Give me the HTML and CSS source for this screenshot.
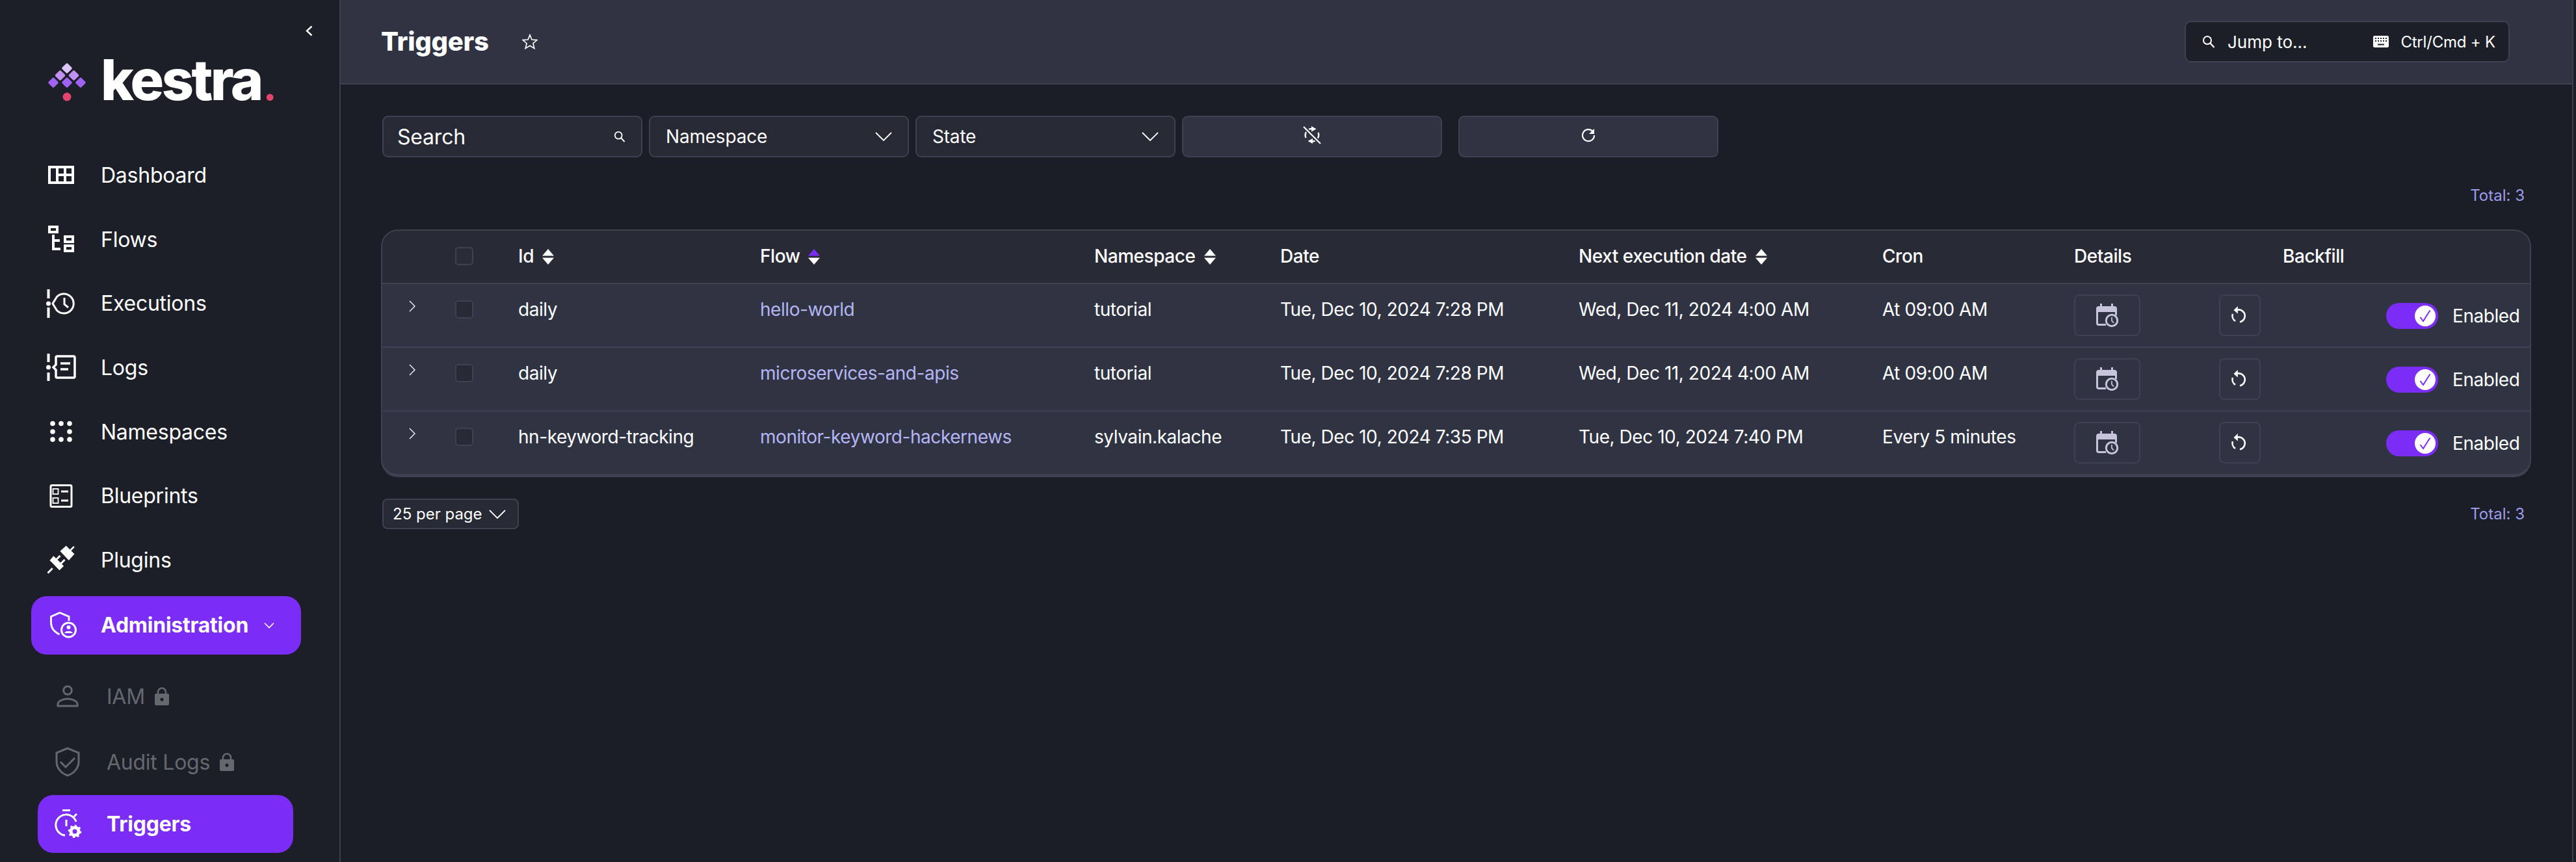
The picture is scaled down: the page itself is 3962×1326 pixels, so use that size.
FILE: index.html
```html
<!DOCTYPE html>
<html lang="en">
<head>
<meta charset="utf-8">
<title>Triggers</title>
<link rel="stylesheet" href="styles.css">
</head>
<body>
<svg class="defs" width="0" height="0" aria-hidden="true">
  <defs>
    <symbol id="i-chev-down" viewBox="0 0 26 14"><path d="M1 1l12 12L25 1" fill="none" stroke="currentColor" stroke-width="1.8"/></symbol>
    <symbol id="i-search" viewBox="0 0 20 20"><circle cx="8" cy="8" r="6" fill="none" stroke="currentColor" stroke-width="2"/><path d="M12.5 12.5L18.5 19" stroke="currentColor" stroke-width="2.2" fill="none"/></symbol>
    <symbol id="i-sort" viewBox="0 0 20 24"><path d="M10 0l9 10.5H1z" fill="currentColor"/><path d="M10 24L1 13.5h18z" fill="#fff"/></symbol>
    <symbol id="i-lock" viewBox="0 0 22 28"><path d="M5 11V7.500a6 6 0 0 1 12 0V11" fill="none" stroke="currentColor" stroke-width="2.500"/><path fill-rule="evenodd" d="M2 10h18a2 2 0 0 1 2 2v14a2 2 0 0 1-2 2H2a2 2 0 0 1-2-2V12a2 2 0 0 1 2-2zm9 6.500a2.600 2.600 0 1 0 0 5.200 2.600 2.600 0 0 0 0-5.200z" fill="currentColor"/></symbol>
    <symbol id="i-expand" viewBox="0 0 10 18"><path d="M1 1l8 8-8 8" fill="none" stroke="currentColor" stroke-width="1.300"/></symbol>
    <symbol id="i-cal" viewBox="0 0 34 37"><path fill="currentColor" d="M6 0h3v4h14V0h3v4h2a4 4 0 0 1 4 4v10h-3v-5H3v17a1 1 0 0 0 1 1h11v3H4a4 4 0 0 1-4-4V8a4 4 0 0 1 4-4h2z"/><circle cx="24" cy="26" r="8.700" fill="#2f3342" stroke="currentColor" stroke-width="3"/><path d="M24 21v5.500l3 3" fill="none" stroke="currentColor" stroke-width="1.800"/></symbol>
    <symbol id="i-backfill" viewBox="0 0 26 28"><path d="M9.500 5.600A9.500 9.500 0 0 1 13 24.300M6 22.900A9.500 9.500 0 0 1 2 12" fill="none" stroke="currentColor" stroke-width="2.600"/><path d="M9.800 0v11.500L3.500 6z" fill="currentColor"/></symbol>
    <symbol id="i-check" viewBox="0 0 18 20"><path d="M1.500 12l4.500 6L16.500 1.500" fill="none" stroke="currentColor" stroke-width="2"/></symbol>
  </defs>
</svg>

<div class="app">
  <aside class="sidebar">
    <button class="collapse" type="button" aria-label="Collapse menu">
      <svg width="11" height="17" viewBox="0 0 11 17"><path d="M9.500 1.500l-7.500 7 7.500 7" fill="none" stroke="#fff" stroke-width="2.400"/></svg>
    </button>
    <div class="logo">
      <svg class="logo-mark" width="62" height="62" viewBox="0 0 62 62">
        <g>
          <rect x="-6" y="-6" width="12" height="12" rx="2" transform="translate(31 8) rotate(45)" fill="#dcc5f9"/>
          <rect x="-6" y="-6" width="12" height="12" rx="2" transform="translate(20.500 19) rotate(45)" fill="#c090f2"/>
          <rect x="-6" y="-6" width="12" height="12" rx="2" transform="translate(41.500 19) rotate(45)" fill="#c090f2"/>
          <rect x="-6" y="-6" width="12" height="12" rx="2" transform="translate(10 30) rotate(45)" fill="#a062f3"/>
          <rect x="-6" y="-6" width="12" height="12" rx="2" transform="translate(31 30) rotate(45)" fill="#a062f3"/>
          <rect x="-6" y="-6" width="12" height="12" rx="2" transform="translate(52 30) rotate(45)" fill="#a062f3"/>
          <circle cx="31" cy="52" r="6.500" fill="#e2436f"/>
        </g>
      </svg>
      <span class="wordmark">kestra<span class="wordmark-dot">.</span></span>
    </div>
    <nav class="nav">
      <a class="nav-item">
        <svg class="nav-icon" width="42" height="30" viewBox="0 0 42 30"><path fill="#fff" fill-rule="evenodd" d="M1 1h40v28H1zM5 5v20h8V5zm12 0v8h8V5zm12 0v8h8V5zM17 17v8h8v-8zm12 0v8h8v-8z"/></svg>
        <span>Dashboard</span>
      </a>
      <a class="nav-item">
        <svg class="nav-icon" width="42" height="42" viewBox="0 0 42 42"><path fill="#fff" fill-rule="evenodd" d="M1 0h16v12H1zm4 4v4h8V4zM25 15h16v12H25zm4 4v4h8v-4zM25 29h16v12H25zm4 4v4h8v-4zM7 14h4v7h8v4h-8v9h9v4H7z"/></svg>
        <span>Flows</span>
      </a>
      <a class="nav-item">
        <svg class="nav-icon" width="46" height="44" viewBox="0 0 46 44"><path d="M3.500 0v14M3.500 28v16" stroke="#fff" stroke-width="4"/><circle cx="3.500" cy="22" r="3.500" fill="#fff"/><path d="M16.500 11.500A15 15 0 1 1 16.500 32.500L10 22z" fill="none" stroke="#fff" stroke-width="3"/><path d="M28 13v10l6 5" fill="none" stroke="#fff" stroke-width="3"/></svg>
        <span>Executions</span>
      </a>
      <a class="nav-item">
        <svg class="nav-icon" width="46" height="42" viewBox="0 0 46 42"><path d="M3.500 0v13M3.500 29v13" stroke="#fff" stroke-width="4"/><circle cx="3.500" cy="21" r="3.500" fill="#fff"/><path d="M15 6a2 2 0 0 1 2-2h25a2 2 0 0 1 2 2v29a2 2 0 0 1-2 2H17a2 2 0 0 1-2-2v-10l-4-4 4-4z" fill="none" stroke="#fff" stroke-width="3.500"/><path d="M22 15h15M22 24h12" stroke="#fff" stroke-width="3.500"/></svg>
        <span>Logs</span>
      </a>
      <a class="nav-item">
        <svg class="nav-icon" width="42" height="34" viewBox="0 0 42 34"><g fill="#fff"><circle cx="8" cy="4.500" r="3.800"/><circle cx="21" cy="4.500" r="3.800"/><circle cx="34" cy="4.500" r="3.800"/><circle cx="8" cy="17" r="3.800"/><circle cx="34" cy="17" r="3.800"/><circle cx="8" cy="29" r="3.800"/><circle cx="21" cy="29" r="3.800"/><circle cx="34" cy="29" r="3.800"/></g></svg>
        <span>Namespaces</span>
      </a>
      <a class="nav-item">
        <svg class="nav-icon" width="42" height="36" viewBox="0 0 42 36"><rect x="5" y="1.500" width="32" height="33" rx="2" fill="none" stroke="#fff" stroke-width="3"/><rect x="8.500" y="7" width="8" height="8" fill="none" stroke="#fff" stroke-width="1.800"/><rect x="8.500" y="21" width="8" height="8" fill="none" stroke="#fff" stroke-width="1.800"/><path d="M21 11h11M21 25h11" stroke="#fff" stroke-width="3"/></svg>
        <span>Blueprints</span>
      </a>
      <a class="nav-item">
        <svg class="nav-icon" width="44" height="44" viewBox="13 12 43 43"><path fill="#fff" d="M33 20.500l9-8 12.500 12.500-8.500 9.500zM47 19l6-6 1.800 1.800-6 6zM18 34l5-6 4 3.500 5-5 2 2-5 5 4.500 4.500 5.500-5.500 2 2-5.500 5.500 3 3-6.500 6.500-15-15.500zM13.500 52.500l7-7 2 2-7 7z"/></svg>
        <span>Plugins</span>
      </a>
      <a class="nav-item nav-active nav-admin">
        <svg class="nav-icon" width="42" height="42" viewBox="0 0 42 42"><path d="M29 14V7.500L15 1.500 1.500 7.500V17c0 8 5 14 13 18" fill="none" stroke="#fff" stroke-width="2.800"/><circle cx="28.500" cy="28" r="11" fill="none" stroke="#fff" stroke-width="3"/><circle cx="28.500" cy="24" r="3" fill="#fff"/><path d="M22 33a7 5 0 0 1 13 0z" fill="#fff"/></svg>
        <span>Administration</span>
        <svg class="admin-chev" width="16" height="10" viewBox="0 0 16 10"><path d="M1 1.500l7 7 7-7" fill="none" stroke="#fff" stroke-width="1.600"/></svg>
      </a>
      <div class="sub-nav">
        <a class="sub-item sub-disabled">
          <svg class="sub-icon" width="34" height="34" viewBox="0 0 34 34"><circle cx="17" cy="8" r="6.300" fill="none" stroke="currentColor" stroke-width="3"/><path d="M2 32v-3c0-4 7-8 15-8s15 4 15 8v3z" fill="none" stroke="currentColor" stroke-width="3"/></svg>
          <span>IAM</span>
          <svg class="lock" width="22" height="28"><use href="#i-lock"/></svg>
        </a>
        <a class="sub-item sub-disabled">
          <svg class="sub-icon" width="38" height="46" viewBox="0 0 38 46"><path d="M19 2L2 9v14c0 10 8 18 17 21 9-3 17-11 17-21V9z" fill="none" stroke="currentColor" stroke-width="3"/><path d="M8 23l8 8 14-14" fill="none" stroke="currentColor" stroke-width="3"/></svg>
          <span>Audit Logs</span>
          <svg class="lock" width="22" height="28"><use href="#i-lock"/></svg>
        </a>
        <a class="sub-item sub-active">
          <svg class="sub-icon trig-icon" width="42" height="44" viewBox="0 0 42 44"><path d="M12 1.500h12M18 16v10" stroke="#fff" stroke-width="3" fill="none"/><path d="M30 11L34 7M16 40A16 16 0 1 1 33 19" fill="none" stroke="#fff" stroke-width="3"/><circle cx="31" cy="34" r="6" fill="none" stroke="#fff" stroke-width="5"/><circle cx="31" cy="34" r="9" fill="none" stroke="#fff" stroke-width="2.500" stroke-dasharray="3 4"/></svg>
          <span>Triggers</span>
        </a>
      </div>
    </nav>
  </aside>

  <main class="main">
    <header class="topbar">
      <h1 class="title">Triggers</h1>
      <svg class="star" width="24" height="24" viewBox="0 0 24 24"><path d="M12 1.800l3 7.200 8 .6-6.100 5.100 1.900 7.700L12 18.300 5.200 22.400l1.900-7.700L1 9.600l8-.6z" fill="none" stroke="#fff" stroke-width="1.700"/></svg>
      <div class="jump">
        <svg class="jump-search" width="20" height="20"><use href="#i-search"/></svg>
        <span class="jump-text">Jump to...</span>
        <svg class="kbd" width="24" height="18" viewBox="0 0 24 18"><path fill="#fff" fill-rule="evenodd" d="M2.500 0h19A2.500 2.500 0 0 1 24 2.500v13a2.500 2.500 0 0 1-2.500 2.500h-19A2.500 2.500 0 0 1 0 15.500v-13A2.500 2.500 0 0 1 2.500 0zM3 3v2h2V3zm4 0v2h2V3zm4 0v2h2V3zm4 0v2h2V3zm4 0v2h2V3zM3 7v2h2V7zm4 0v2h2V7zm4 0v2h2V7zm4 0v2h2V7zm4 0v2h2V7zM7 12.500v2h10v-2z"/></svg>
        <span class="jump-keys">Ctrl/Cmd + K</span>
      </div>
    </header>

    <div class="content">
      <div class="filters">
        <div class="field field-search">
          <span class="search-label">Search</span>
          <svg width="18" height="20" class="ficon"><use href="#i-search"/></svg>
        </div>
        <div class="field">
          <span>Namespace</span>
          <svg width="26" height="14" class="ficon"><use href="#i-chev-down"/></svg>
        </div>
        <div class="field">
          <span>State</span>
          <svg width="26" height="14" class="ficon"><use href="#i-chev-down"/></svg>
        </div>
        <button class="fbtn" type="button" aria-label="Toggle auto refresh">
          <svg width="28" height="28" viewBox="0 0 28 28"><path d="M4.500 18A10 10 0 0 1 13 4M23.500 10A10 10 0 0 1 15 23.500" fill="none" stroke="#fff" stroke-width="2.400"/><path d="M13 0l7.500 4.500L13 8.500zM15 19v8l-7.500-4z" fill="#fff"/><path d="M1 1l26 26" stroke="#2f3342" stroke-width="6"/><path d="M1 1l26 26" stroke="#fff" stroke-width="2.200"/></svg>
        </button>
        <button class="fbtn fbtn-refresh" type="button" aria-label="Refresh">
          <svg width="22" height="22" viewBox="0 0 22 22"><path d="M18 5.500A9 9 0 1 0 20 11" fill="none" stroke="#fff" stroke-width="2.200"/><path d="M20 1v8h-8z" fill="#fff"/></svg>
        </button>
      </div>

      <div class="total total-top">Total: 3</div>

      <div class="table">
        <div class="row row-head">
          <div class="cell"></div>
          <div class="cell"><span class="checkbox"></span></div>
          <div class="cell">Id <svg class="sort" width="20" height="24"><use href="#i-sort" color="#fff"/></svg></div>
          <div class="cell">Flow <svg class="sort" width="20" height="24"><use href="#i-sort" color="#7b2cf5"/></svg></div>
          <div class="cell">Namespace <svg class="sort" width="20" height="24"><use href="#i-sort" color="#fff"/></svg></div>
          <div class="cell">Date</div>
          <div class="cell">Next execution date <svg class="sort" width="20" height="24"><use href="#i-sort" color="#fff"/></svg></div>
          <div class="cell">Cron</div>
          <div class="cell">Details</div>
          <div class="cell head-backfill">Backfill</div>
          <div class="cell"></div>
        </div>

        <div class="row">
          <div class="cell"><svg class="expand" width="10" height="18"><use href="#i-expand"/></svg></div>
          <div class="cell"><span class="checkbox"></span></div>
          <div class="cell">daily</div>
          <div class="cell link">hello-world</div>
          <div class="cell">tutorial</div>
          <div class="cell">Tue, Dec 10, 2024 7:28 PM</div>
          <div class="cell">Wed, Dec 11, 2024 4:00 AM</div>
          <div class="cell">At 09:00 AM</div>
          <div class="cell"><span class="iconbtn iconbtn-details"><svg width="34" height="37"><use href="#i-cal"/></svg></span></div>
          <div class="cell"><span class="iconbtn iconbtn-backfill"><svg width="26" height="28"><use href="#i-backfill"/></svg></span></div>
          <div class="cell toggle-cell"><span class="toggle"><span class="knob"><svg width="18" height="20"><use href="#i-check"/></svg></span></span><span>Enabled</span></div>
        </div>

        <div class="row">
          <div class="cell"><svg class="expand" width="10" height="18"><use href="#i-expand"/></svg></div>
          <div class="cell"><span class="checkbox"></span></div>
          <div class="cell">daily</div>
          <div class="cell link">microservices-and-apis</div>
          <div class="cell">tutorial</div>
          <div class="cell">Tue, Dec 10, 2024 7:28 PM</div>
          <div class="cell">Wed, Dec 11, 2024 4:00 AM</div>
          <div class="cell">At 09:00 AM</div>
          <div class="cell"><span class="iconbtn iconbtn-details"><svg width="34" height="37"><use href="#i-cal"/></svg></span></div>
          <div class="cell"><span class="iconbtn iconbtn-backfill"><svg width="26" height="28"><use href="#i-backfill"/></svg></span></div>
          <div class="cell toggle-cell"><span class="toggle"><span class="knob"><svg width="18" height="20"><use href="#i-check"/></svg></span></span><span>Enabled</span></div>
        </div>

        <div class="row row-last">
          <div class="cell"><svg class="expand" width="10" height="18"><use href="#i-expand"/></svg></div>
          <div class="cell"><span class="checkbox"></span></div>
          <div class="cell">hn-keyword-tracking</div>
          <div class="cell link">monitor-keyword-hackernews</div>
          <div class="cell">sylvain.kalache</div>
          <div class="cell">Tue, Dec 10, 2024 7:35 PM</div>
          <div class="cell">Tue, Dec 10, 2024 7:40 PM</div>
          <div class="cell">Every 5 minutes</div>
          <div class="cell"><span class="iconbtn iconbtn-details"><svg width="34" height="37"><use href="#i-cal"/></svg></span></div>
          <div class="cell"><span class="iconbtn iconbtn-backfill"><svg width="26" height="28"><use href="#i-backfill"/></svg></span></div>
          <div class="cell toggle-cell"><span class="toggle"><span class="knob"><svg width="18" height="20"><use href="#i-check"/></svg></span></span><span>Enabled</span></div>
        </div>
      </div>

      <div class="pager">
        <div class="perpage">
          <span>25 per page</span>
          <svg width="26" height="14"><use href="#i-chev-down"/></svg>
        </div>
        <div class="total">Total: 3</div>
      </div>
    </div>
  </main>
</div>
</body>
</html>
```

FILE: styles.css
```css
* { box-sizing: border-box; }
html, body { margin: 0; padding: 0; height: 100%; }
body {
  background: #1b1e26;
  color: #fff;
  font-family: Inter, "Liberation Sans", sans-serif;
  overflow: hidden;
}
.defs { position: absolute; }
.app { display: flex; width: 3962px; height: 1326px; }

/* Sidebar */
.sidebar {
  width: 524px;
  flex: none;
  height: 1326px;
  background: #1c1f27;
  border-right: 2px solid #3a3e4d;
  position: relative;
  overflow: hidden;
}
.collapse {
  position: absolute;
  left: 470px;
  top: 39px;
  padding: 0;
  border: 0;
  background: none;
  line-height: 0;
}
.logo {
  display: flex;
  align-items: flex-start;
  padding: 97px 0 0 72px;
  height: 220px;
  gap: 21px;
}
.wordmark {
  font-size: 86px;
  font-weight: 800;
  line-height: 72px;
  letter-spacing: -3.5px;
  color: #fff;
  margin-top: -10px;
}
.wordmark-dot { color: #e2436f; font-size: 58px; margin-left: 3px; }
.nav { display: flex; flex-direction: column; }
.nav-item {
  height: 98.7px;
  display: flex;
  align-items: center;
  padding-left: 70px;
  font-size: 32px;
  letter-spacing: -0.25px;
  color: #fff;
}
.nav-icon { width: 48px; margin-right: 37px; flex: none; }
.nav-active {
  background: #7b2cf5;
  margin: 6px 59px 0 48px;
  height: 90px;
  border-radius: 24px;
  padding-left: 26px;
  font-weight: 700;
}
.nav-admin .nav-icon { margin-right: 33px; }
.admin-chev { margin-left: 24px; }
.sub-nav { display: flex; flex-direction: column; padding-top: 14px; }
.sub-item {
  height: 101px;
  display: flex;
  align-items: center;
  padding-left: 84px;
  font-size: 32px;
  letter-spacing: -0.25px;
  color: #fff;
}
.sub-disabled { color: #66686f; }
.sub-icon { width: 40px; margin-right: 40px; flex: none; }
.lock { margin-left: 15px; }
.sub-active {
  background: #7b2cf5;
  margin: 0 71px 0 58px;
  height: 89px;
  border-radius: 24px;
  padding-left: 26px;
  font-weight: 700;
}
.trig-icon { width: 42px; margin-right: 38px; }

/* Main */
.main {
  flex: 1;
  min-width: 0;
  display: flex;
  flex-direction: column;
  margin-right: 4px;
  border-right: 2px solid #3a3e4d;
}
.topbar {
  height: 130px;
  background: #2f3342;
  border-bottom: 2px solid #3d4152;
  display: flex;
  align-items: center;
  padding: 0 96px 0 62px;
  flex: none;
}
.title { margin: 0; font-size: 40px; font-weight: 800; line-height: 1; letter-spacing: -0.3px; }
.star { margin-left: 51px; }
.jump {
  margin-left: auto;
  width: 500px;
  height: 64px;
  background: #1c1f27;
  border: 2px solid #3d4152;
  border-radius: 10px;
  display: flex;
  align-items: center;
  padding: 0 20px 0 25px;
  font-size: 26px;
}
.jump-text { margin-left: 19px; }
.jump-keys { font-size: 24px; letter-spacing: -0.2px; }
.kbd { margin-left: auto; margin-right: 18px; }

.content { padding: 48px 63px 0 62px; }
.filters { display: flex; margin-left: 2px; gap: 10px; }
.field {
  width: 400px;
  height: 64px;
  background: #272934;
  border: 2px solid #3d4152;
  border-radius: 9px;
  display: flex;
  align-items: center;
  justify-content: space-between;
  padding: 0 24px;
  font-size: 28px;
  letter-spacing: -0.2px;
}
.field-search { padding: 0 24px 0 21px; }
.search-label { font-size: 32px; }
.ficon { flex: none; }
.fbtn {
  width: 400px;
  height: 64px;
  background: #2f3342;
  border: 2px solid #3d4152;
  border-radius: 9px;
  display: flex;
  align-items: center;
  justify-content: center;
  padding: 0 0 4px;
}
.fbtn-refresh { margin-left: 15px; }
.total { color: #9c9cea; font-size: 24px; text-align: right; padding-right: 10px; }
.total-top { margin-top: 44px; line-height: 30px; }

/* Table */
.table {
  margin-top: 37px;
  width: 3307px;
  border: 2px solid #3d4152;
  border-bottom-width: 5px;
  border-radius: 26px;
  overflow: hidden;
  background: #2f3342;
}
.row {
  display: grid;
  grid-template-columns: 112px 97px 372px 514px 286px 459px 467px 295px 223px 257px 1fr;
  height: 98px;
  border-bottom: 2px solid #3d4152;
  font-size: 28px;
  line-height: 34px;
  letter-spacing: -0.45px;
}
.row-last { border-bottom: 0; height: 96px; }
.row-head { background: #282a36; height: 82px; font-weight: 500; }
.row-head .cell { padding-top: 22px; display: flex; align-items: flex-start; gap: 12px; }
.cell { padding-top: 22px; white-space: nowrap; }
.link { color: #b5b5f5; }
.checkbox {
  display: block;
  width: 28px;
  height: 28px;
  border: 2px solid #3d4152;
  border-radius: 5px;
  background: #272934;
}
.row-head .checkbox { margin-top: 3px; background: #2a2c38; }
.row:not(.row-head) .checkbox { margin-top: 3px; }
.expand { display: block; margin-left: 41px; margin-top: 3px; color: #fff; }
.sort { margin-top: 6px; }
.head-backfill { padding-left: 98px; }
.iconbtn {
  display: flex;
  align-items: center;
  justify-content: center;
  height: 64px;
  border: 2px solid #3d4152;
  border-radius: 8px;
  margin-top: -6px;
}
.iconbtn-details { width: 102px; color: #c6c3da; }
.iconbtn-backfill { width: 64px; color: #fff; }
.toggle-cell { display: flex; align-items: center; gap: 22px; padding-top: 0; height: 96px; margin-top: 1px; }
.toggle {
  width: 80px;
  height: 40px;
  border-radius: 20px;
  background: #7b2cf5;
  display: flex;
  align-items: center;
  justify-content: flex-end;
  padding-right: 4px;
}
.knob {
  width: 32px;
  height: 32px;
  border-radius: 50%;
  background: #fff;
  color: #7b2cf5;
  display: flex;
  align-items: center;
  justify-content: center;
}

/* Pager */
.pager { display: flex; justify-content: space-between; align-items: center; margin-top: 33px; padding-left: 2px; }
.perpage {
  width: 210px;
  height: 47px;
  background: #272934;
  border: 2px solid #3d4152;
  border-radius: 8px;
  display: flex;
  align-items: center;
  justify-content: space-between;
  padding: 0 18px 0 14px;
  font-size: 24px;
}
```
